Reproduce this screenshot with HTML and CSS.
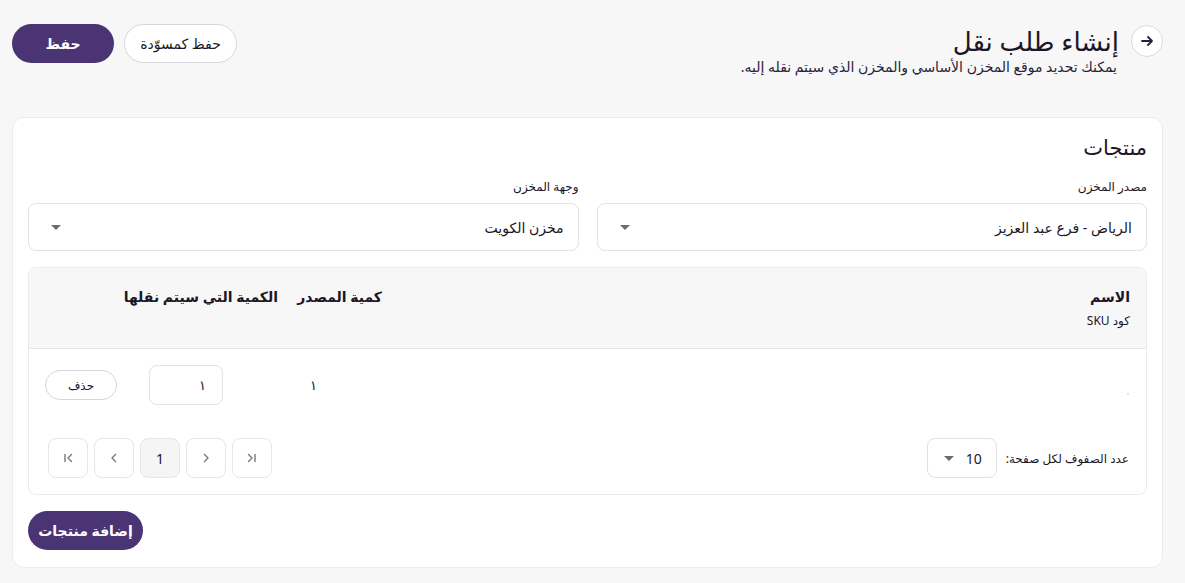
FILE: index.html
```html
<!DOCTYPE html>
<html lang="ar" dir="rtl">
<head>
<meta charset="utf-8">
<link rel="stylesheet" href="styles.css">
</head>
<body>
<div class="page">
  <header class="top">
    <div class="title-wrap">
      <button class="back" aria-label="رجوع">
        <svg width="14" height="14" viewBox="0 0 14 14" fill="none" stroke="#2b1d3d" stroke-width="1.8" stroke-linecap="round" stroke-linejoin="round"><path d="M2 7h10M8 3l4 4-4 4"/></svg>
      </button>
      <div class="titles">
        <h1>إنشاء طلب نقل</h1>
        <p>يمكنك تحديد موقع المخزن الأساسي والمخزن الذي سيتم نقله إليه.</p>
      </div>
    </div>
    <div class="actions">
      <button class="btn outline">حفظ كمسوّدة</button>
      <button class="btn primary">حفظ</button>
    </div>
  </header>

  <section class="card">
    <h2>منتجات</h2>
    <div class="fields">
      <div class="field">
        <label>مصدر المخزن</label>
        <div class="select"><span>الرياض - فرع عبد العزيز</span><i class="caret"></i></div>
      </div>
      <div class="field">
        <label>وجهة المخزن</label>
        <div class="select"><span>مخزن الكويت</span><i class="caret"></i></div>
      </div>
    </div>

    <div class="table">
      <div class="thead">
        <div class="cell th"><b>الاسم</b><small>كود SKU</small></div>
        <div class="cell th"><b>كمية المصدر</b></div>
        <div class="cell th"><b>الكمية التي سيتم نقلها</b></div>
        <div class="cell th"></div>
      </div>
      <div class="trow">
        <div class="cell td name"><span class="dot"></span></div>
        <div class="cell td end">١</div>
        <div class="cell td end"><div class="qty">١</div></div>
        <div class="cell td end"><button class="del">حذف</button></div>
      </div>
      <div class="pager">
        <div class="perpage">
          <span>عدد الصفوف لكل صفحة:</span>
          <div class="mini-select"><span>10</span><i class="caret"></i></div>
        </div>
        <div class="pages">
          <button class="pg">
            <svg width="12" height="12" viewBox="0 0 12 12" fill="none" stroke="#777" stroke-width="1.4" stroke-linecap="round" stroke-linejoin="round"><path d="M3 2.5v7M9.5 2.5L6 6l3.5 3.5"/></svg>
          </button>
          <button class="pg">
            <svg width="12" height="12" viewBox="0 0 12 12" fill="none" stroke="#777" stroke-width="1.4" stroke-linecap="round" stroke-linejoin="round"><path d="M7.5 2.5L4 6l3.5 3.5"/></svg>
          </button>
          <button class="pg current">1</button>
          <button class="pg">
            <svg width="12" height="12" viewBox="0 0 12 12" fill="none" stroke="#777" stroke-width="1.4" stroke-linecap="round" stroke-linejoin="round"><path d="M4.5 2.5L8 6l-3.5 3.5"/></svg>
          </button>
          <button class="pg">
            <svg width="12" height="12" viewBox="0 0 12 12" fill="none" stroke="#777" stroke-width="1.4" stroke-linecap="round" stroke-linejoin="round"><path d="M2.5 2.5L6 6 2.5 9.5M9 2.5v7"/></svg>
          </button>
        </div>
      </div>
    </div>

    <div class="add-row">
      <button class="btn primary add">إضافة منتجات</button>
    </div>
  </section>
</div>
</body>
</html>
```

FILE: styles.css
```css
* { box-sizing: border-box; }
html, body { margin: 0; padding: 0; }
body {
  background: #f7f7f7;
  font-family: "Noto Sans", "DejaVu Sans", sans-serif;
  color: #1c1626;
  direction: rtl;
}
button { font-family: inherit; cursor: pointer; white-space: nowrap; }
.page { padding: 24px 22px 0 12px; }

.top {
  display: flex;
  justify-content: space-between;
  align-items: flex-start;
}
.title-wrap { display: flex; align-items: flex-start; gap: 12px; }
.back {
  width: 32px; height: 32px;
  margin-top: 1px;
  border-radius: 50%;
  border: 1px solid #dcd8e2;
  background: #fff;
  display: flex; align-items: center; justify-content: center;
  padding: 0;
  flex-shrink: 0;
}
.titles h1 {
  margin: 0;
  font-size: 26px;
  font-weight: 400;
  line-height: 34px;
  color: #1c1626;
}
.titles p {
  margin: 0 2px 0 0;
  font-size: 14px;
  line-height: 18px;
  color: #2a1f3b;
}
.actions { display: flex; gap: 10px; }
.btn {
  height: 39px;
  border-radius: 20px;
  font-size: 14px;
  padding: 0 12px;
}
.btn.primary {
  background: #4b3474;
  color: #fff;
  border: none;
  width: 102px;
  font-weight: 700;
}
.btn.outline {
  background: #fff;
  color: #1c1626;
  border: 1px solid #d8d5dd;
  width: 113px;
}

.card {
  margin-top: 41px;
  background: #fff;
  border: 1px solid #ececec;
  border-radius: 12px;
  padding: 14px 15px 17px 15px;
}
.card h2 {
  margin: 0;
  font-size: 21px;
  font-weight: 400;
  line-height: 30px;
}
.fields {
  display: grid;
  grid-template-columns: 1fr 1fr;
  gap: 18px;
  margin-top: 16px;
}
.field label {
  display: block;
  font-size: 12px;
  line-height: 18px;
  margin-bottom: 7px;
  color: #1c1626;
}
.select {
  height: 48px;
  border: 1px solid #e2e2e2;
  border-radius: 8px;
  display: flex;
  align-items: center;
  justify-content: space-between;
  padding: 0 14px 0 22px;
  font-size: 14px;
}
.caret {
  width: 0; height: 0;
  border-left: 5px solid transparent;
  border-right: 5px solid transparent;
  border-top: 5px solid #6e6878;
}

.table {
  margin-top: 16px;
  border: 1px solid #ebebeb;
  border-radius: 8px;
  overflow: hidden;
}
.thead, .trow {
  display: grid;
  grid-template-columns: 1fr 104px 164px 101px;
}
.thead {
  background: #f7f7f7;
  height: 81px;
  border-bottom: 1px solid #e6e6e6;
}
.cell { padding: 0 16px; white-space: nowrap; min-width: 0; }
.th { padding-top: 19px; display: flex; flex-direction: column; }
.th b { font-size: 14px; font-weight: 700; line-height: 20px; }
.th small { font-size: 12px; line-height: 18px; margin-top: 5px; }
.trow { height: 72px; align-items: center; }
.td { font-size: 13px; display: flex; align-items: center; }
.td.end { justify-content: flex-end; }
.dot {
  width: 2px; height: 2px; background: #ddd; border-radius: 50%;
  margin-top: 18px; margin-right: 1px;
}
.qty {
  width: 74px; height: 40px;
  flex-shrink: 0;
  border: 1px solid #e2e2e2;
  border-radius: 8px;
  display: flex; align-items: center;
  padding-right: 16px;
  margin-left: 3px;
  font-size: 13px;
}
.del {
  width: 72px; height: 30px;
  flex-shrink: 0;
  border: 1px solid #d8d5dd;
  border-radius: 15px;
  background: #fff;
  font-size: 12px;
  color: #1c1626;
  padding: 0;
}
.pager {
  display: flex;
  justify-content: space-between;
  align-items: center;
  padding: 17px 17px 16px 19px;
}
.perpage { display: flex; align-items: center; gap: 9px; font-size: 12px; white-space: nowrap; }
.mini-select {
  width: 70px; height: 40px;
  border: 1px solid #e2e2e2;
  border-radius: 8px;
  display: flex; align-items: center; justify-content: space-between;
  padding: 0 14px 0 16px;
  font-size: 14px;
}
.pages { display: flex; gap: 6px; direction: ltr; }
.pg {
  width: 40px; height: 40px;
  border: 1px solid #e6e6e6;
  border-radius: 8px;
  background: #fff;
  display: flex; align-items: center; justify-content: center;
  padding: 0;
  font-size: 14px;
  color: #1c1626;
}
.pg.current { background: #f5f5f5; }
.add-row { margin-top: 16px; display: flex; justify-content: flex-end; }
.btn.add { width: 115px; padding: 0; }
```
